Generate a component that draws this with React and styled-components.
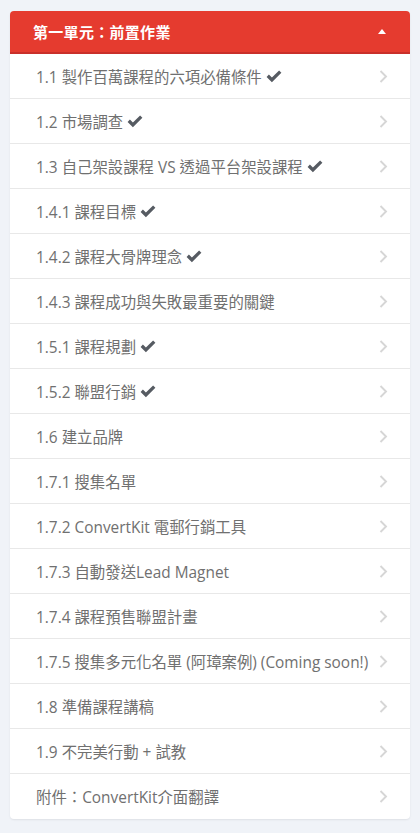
import React from "react";
import styled, { createGlobalStyle } from "styled-components";

const Global = createGlobalStyle`
  html, body { margin: 0; padding: 0; background: #f0f3f8; }
  body { font-family: "Open Sans", "Noto Sans CJK TC", sans-serif; }
  * { box-sizing: border-box; }
`;

const Page = styled.div`
  padding: 11px 10px 12px 10px;
`;

const Card = styled.div`
  background: #fff;
  border-radius: 4px;
  box-shadow: 0 1px 2px rgba(0, 0, 0, 0.08);
  overflow: hidden;
`;

const Header = styled.div`
  display: flex;
  align-items: center;
  justify-content: space-between;
  height: 43px;
  padding: 0 24px 0 23px;
  background: #e53b2f;
  border-bottom: 2px solid #c9302a;
  color: #fff;
  font-weight: 700;
  font-size: 15px;
  letter-spacing: 0.3px;
`;

const Caret = styled.span`
  width: 0;
  height: 0;
  border-left: 4.5px solid transparent;
  border-right: 4.5px solid transparent;
  border-bottom: 5px solid #fff;
  margin-top: -1px;
`;

const Row = styled.div`
  display: flex;
  align-items: center;
  justify-content: space-between;
  height: 45px;
  padding: 0 22px 0 26px;
  border-bottom: ${(p) => (p.$last ? "none" : "1px solid #e8e8e8")};
  color: #707070;
  font-size: 15.4px;
`;

const Label = styled.span`
  display: flex;
  align-items: center;
  gap: 4px;
  white-space: nowrap;
`;

const Check = () => (
  <svg width="16" height="13" viewBox="0 0 16 13">
    <path d="M0.6 6.9 L2.9 4.6 L5.9 7.6 L13.1 0.4 L15.4 2.7 L5.9 12.2 Z" fill="#565b62" />
  </svg>
);

const Chevron = () => (
  <svg width="9" height="13" viewBox="0 0 9 13">
    <path d="M1.5 1 L7 6.5 L1.5 12" fill="none" stroke="#d6d6d6" strokeWidth="1.9" />
  </svg>
);

const items = [
  ["1.1 製作百萬課程的六項必備條件", true],
  ["1.2 市場調查", true],
  ["1.3 自己架設課程 VS 透過平台架設課程", true],
  ["1.4.1 課程目標", true],
  ["1.4.2 課程大骨牌理念", true],
  ["1.4.3 課程成功與失敗最重要的關鍵", false],
  ["1.5.1 課程規劃", true],
  ["1.5.2 聯盟行銷", true],
  ["1.6 建立品牌", false],
  ["1.7.1 搜集名單", false],
  ["1.7.2 ConvertKit 電郵行銷工具", false],
  ["1.7.3 自動發送Lead Magnet", false],
  ["1.7.4 課程預售聯盟計畫", false],
  ["1.7.5 搜集多元化名單 (阿璋案例) (Coming soon!)", false],
  ["1.8 準備課程講稿", false],
  ["1.9 不完美行動 + 試教", false],
  ["附件：ConvertKit介面翻譯", false],
];

export default function App() {
  return (
    <Page>
      <Global />
      <Card>
        <Header>
          <span>第一單元：前置作業</span>
          <Caret />
        </Header>
        {items.map(([t, done], i) => (
          <Row key={i} $last={i === items.length - 1}>
            <Label>
              {t}
              {done && <Check />}
            </Label>
            <Chevron />
          </Row>
        ))}
      </Card>
    </Page>
  );
}
